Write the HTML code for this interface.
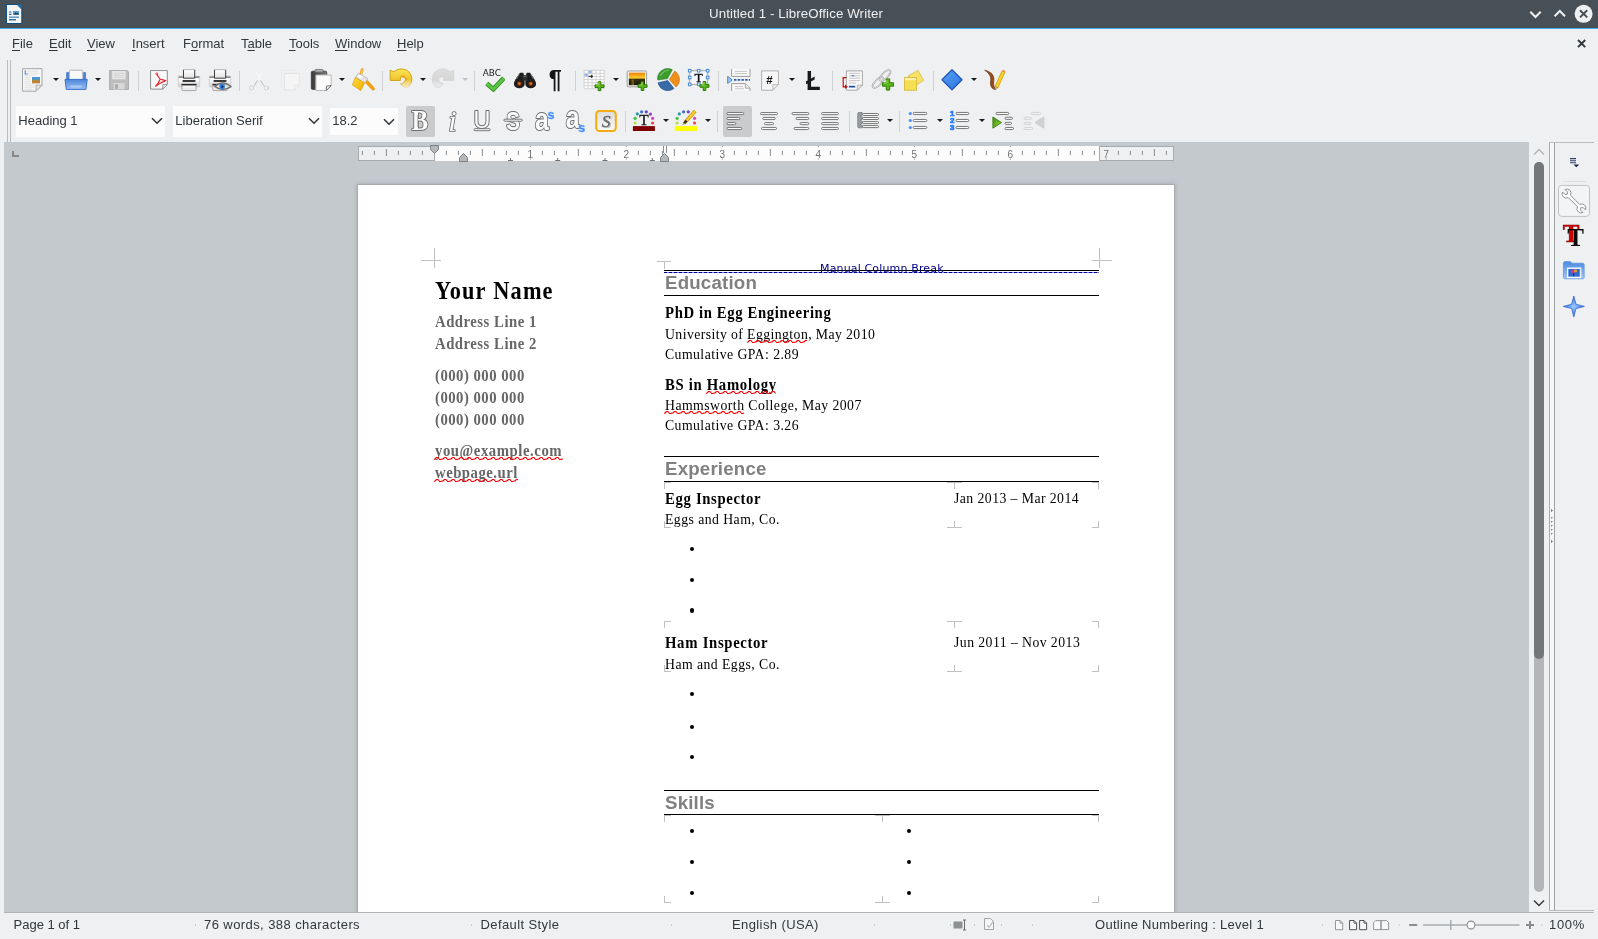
<!DOCTYPE html>
<html lang="en"><head><meta charset="utf-8"><title>Untitled 1 - LibreOffice Writer</title>
<style>
*{box-sizing:border-box;margin:0;padding:0}
html,body{width:1598px;height:939px;overflow:hidden;background:#eff0f1}
body{position:relative;will-change:transform;font-family:"Liberation Sans","DejaVu Sans",sans-serif;font-size:13px;color:#31363b}
.abs{position:absolute}
.t{position:absolute;white-space:nowrap;line-height:1}
#titlebar{left:0;top:0;width:1598px;height:28px;background:#475057}
#titleline{left:0;top:28px;width:1598px;height:1px;background:#3daee9}
#title{left:0;top:0;width:1592px;text-align:center;color:#eff0f1;font-size:13.3px;line-height:27px;letter-spacing:.1px}
.menu{top:37px;font-size:13px;height:14px}
.menu u{text-decoration:underline;text-underline-offset:2px}
.combo{background:#fcfcfc}
.combo .t{left:2.3px;font-size:13px}
.sep{width:1px;background:#cfd1d3}
.arr{width:0;height:0;border-left:3px solid transparent;border-right:3px solid transparent;border-top:3px solid #1a1a1a}
.hl{background:#c9cbcd;border-radius:2px}
#docbg{left:4px;top:142px;width:1525px;height:770px;background:#c4c9cd}
#page{left:358px;top:185px;width:816px;height:740px;background:#fff;box-shadow:0 0 0 1px #a7abae,0 0 4px 1px rgba(70,80,90,.28)}
.doc{font-family:"Liberation Serif","DejaVu Serif",serif;color:#000}
.b{font-weight:bold}
.g{color:#666}
.h1{font-family:"Liberation Sans","DejaVu Sans",sans-serif;font-weight:bold;font-size:18.67px;color:#808080}
.hline{height:1px;background:#000;left:664px;width:435px}
.mk{background:#c0c0c0}
.bul{width:4.4px;height:4.4px;border-radius:50%;background:#000}
.sb{top:918px;font-size:13px}
.wavy{height:3px}
</style></head><body>

<div class="abs" id="titlebar"></div><div class="abs" id="titleline"></div>
<div class="t" id="title">Untitled 1 - LibreOffice Writer</div>
<svg class="abs" style="left:4px;top:2px" width="22" height="24" viewBox="4 2 22 24"><path d="M6.5 4.5H17.2L21.8 9.2V23.5H6.5z" fill="#f4f4f4" stroke="#0f4f80" stroke-width="1"/><path d="M17 4.2h5v5z" fill="#1b6aa5"/><path d="M9 12h2.4M9 14.4h2.4" stroke="#1b6aa5" stroke-width="1.2"/><rect x="13" y="11" width="6" height="4" fill="#5b9bd0"/><path d="M13.5 14.5l2-2.2 1.3 1.2 1-1 1 2z" fill="#24405a"/><path d="M9 17.2h10" stroke="#6a9cc8" stroke-width="1.6"/><path d="M9 19.8h7" stroke="#0f4f80" stroke-width="1.2"/></svg>
<svg class="abs" style="left:1524px;top:2px" width="72" height="24" viewBox="1524 2 72 24"><path d="M1530.3 11.8l5.2 5.2 5.2-5.2" fill="none" stroke="#eff0f1" stroke-width="2"/><path d="M1554.6 16.2l5.2-5.2 5.2 5.2" fill="none" stroke="#eff0f1" stroke-width="2"/><circle cx="1583.6" cy="13.8" r="9" fill="#eff0f1"/><path d="M1580 10.2l7.2 7.2M1587.2 10.2l-7.2 7.2" stroke="#475057" stroke-width="2"/></svg>
<div class="t menu" style="left:12px"><u>F</u>ile</div>
<div class="t menu" style="left:49px"><u>E</u>dit</div>
<div class="t menu" style="left:87px"><u>V</u>iew</div>
<div class="t menu" style="left:132px"><u>I</u>nsert</div>
<div class="t menu" style="left:183px">F<u>o</u>rmat</div>
<div class="t menu" style="left:241px">T<u>a</u>ble</div>
<div class="t menu" style="left:289px"><u>T</u>ools</div>
<div class="t menu" style="left:335px"><u>W</u>indow</div>
<div class="t menu" style="left:397px"><u>H</u>elp</div>
<svg class="abs" style="left:1575px;top:37px" width="14" height="14" viewBox="0 0 14 14"><path d="M3 3l7.2 7.2M10.2 3L3 10.2" stroke="#31363b" stroke-width="1.9"/></svg>
<div class="abs" style="left:7px;top:60px;width:1px;height:82px;background:#b9bbbd"></div>
<div class="abs" style="left:10px;top:60px;width:1px;height:82px;background:#b9bbbd"></div>
<svg class="abs" style="left:20.0px;top:68.0px" width="24" height="24" viewBox="0 0 24 24"><path d="M2.5 0.7H22V17.2L16 23.2H2.5z" fill="#f7f7f7" stroke="#a6a6a6"/><path d="M22 17.2h-6v6z" fill="#e2e2e2" stroke="#a6a6a6" stroke-width=".8" stroke-linejoin="round"/><path d="M4.5 3.2h14" stroke="#dcdcdc" stroke-width=".8"/><path d="M4.5 5.2h15" stroke="#dcdcdc" stroke-width=".8"/><path d="M4.5 7.2h12" stroke="#dcdcdc" stroke-width=".8"/><path d="M4.5 9.2h6" stroke="#dcdcdc" stroke-width=".8"/><path d="M4.5 11.2h6" stroke="#dcdcdc" stroke-width=".8"/><path d="M4.5 13.2h6" stroke="#dcdcdc" stroke-width=".8"/><path d="M4.5 15.2h6" stroke="#dcdcdc" stroke-width=".8"/><path d="M4.5 17.2h12" stroke="#dcdcdc" stroke-width=".8"/><path d="M4.5 19.2h10" stroke="#dcdcdc" stroke-width=".8"/><path d="M4.5 21.2h8" stroke="#dcdcdc" stroke-width=".8"/><path d="M5.2 2.2v3.8h2.3" fill="none" stroke="#5b8fde" stroke-width="1.1"/><rect x="12" y="9" width="8" height="6.2" fill="#4c93dc"/><rect x="12" y="11.6" width="8" height="1" fill="#6aa84f"/><rect x="12" y="12.4" width="8" height="2.8" fill="#c9822a"/></svg>
<div class="abs arr" style="left:52.5px;top:78px;border-top-color:#1a1a1a"></div>
<svg class="abs" style="left:64.0px;top:68.0px" width="24" height="24" viewBox="0 0 24 24"><defs><linearGradient id="gOpen" x1="0" y1="0" x2="0" y2="1"><stop offset="0" stop-color="#4d86dc"/><stop offset="1" stop-color="#9cc0f5"/></linearGradient></defs><path d="M2.6 11.5V4.6h3v6.9zM18.6 11.5V4.6h3v6.9z" fill="#4a80d6" stroke="#386ac0" stroke-width=".6"/><rect x="5.4" y="2.2" width="13.4" height="10" rx="1" fill="#f8f8f8" stroke="#b4b4b4"/><path d="M1 11.4h22.2l-1.3 10H2.3z" fill="url(#gOpen)" stroke="#3a72cc" stroke-linejoin="round"/><path d="M6 17.5h12l-1.2 2H7.2z" fill="#b9d3f8" opacity=".8"/></svg>
<div class="abs arr" style="left:94.5px;top:78px;border-top-color:#1a1a1a"></div>
<svg class="abs" style="left:107.0px;top:68.0px" width="24" height="24" viewBox="0 0 24 24"><path d="M2.5 2.5h17.6l1.4 1.4v17.6h-19z" fill="#bdbdbd" stroke="#adadad"/><rect x="5.2" y="3" width="13.4" height="8.3" fill="#e6e6e6"/><path d="M7 5.3h10M7 7.3h10M7 9.3h10" stroke="#d0d0d0" stroke-width=".8"/><rect x="6.6" y="15" width="11" height="6.5" fill="#d8d8d8"/><rect x="8.2" y="16.3" width="2.6" height="4.4" fill="#a6a6a6"/></svg>
<div class="abs sep" style="left:138px;top:71px;height:20px"></div>
<svg class="abs" style="left:147.0px;top:68.0px" width="24" height="24" viewBox="0 0 24 24"><path d="M3.6 2.6H20.3V16.5L15.700000000000001 21.1H3.6z" fill="#fbfbfb" stroke="#8c8c8c"/><path d="M20.3 16.5h-4.6v4.6z" fill="#e8e8e8" stroke="#8c8c8c" stroke-width=".8" stroke-linejoin="round"/><path d="M10 6.2C11 8.5 12 10 13.2 11.2C12 14 10.5 16.5 8.6 18.2M18.8 12.6C16.5 12 14.5 11.6 13.2 11.2M18.8 12.6C15 14 11.5 16 8.6 18.2" fill="none" stroke="#e8262c" stroke-width="1.2" stroke-linecap="round"/><circle cx="9.8" cy="5.8" r="1" fill="none" stroke="#e8262c" stroke-width=".8"/></svg>
<svg class="abs" style="left:177.0px;top:68.0px" width="24" height="24" viewBox="0 0 24 24"><defs><linearGradient id="gPrn" x1="0" y1="0" x2="0" y2="1"><stop offset="0" stop-color="#8c8c8c"/><stop offset=".15" stop-color="#8c8c8c"/><stop offset=".16" stop-color="#fdfdfd"/><stop offset=".55" stop-color="#f4f4f4"/><stop offset="1" stop-color="#cfcfcf"/></linearGradient><linearGradient id="gPap" x1="0" y1="0" x2="0" y2="1"><stop offset="0" stop-color="#ffffff"/><stop offset="1" stop-color="#e2e2e2"/></linearGradient></defs><rect x="1.3" y="8.1" width="21.4" height="10.8" rx="1" fill="url(#gPrn)" stroke="#c4c4c4" stroke-width=".7"/><path d="M6.5 1.8V10.2H17.7V1.8" fill="url(#gPap)" stroke="#3c3c3c" stroke-width="1"/><path d="M6.5 1.6H17.7" stroke="#b0b0b0" stroke-width=".9"/><rect x="5.6" y="12" width="12.8" height="2" fill="#3a3a3a"/><path d="M2 15.2h20" stroke="#d8d8d8" stroke-width=".8"/><path d="M5.2 17h13.6l.5 4.4a1.2 1.2 0 0 1-1.2 1.2H5.9a1.2 1.2 0 0 1-1.2-1.2z" fill="url(#gPap)" stroke="#9a9a9a" stroke-width=".8"/><path d="M4.4 16.6h15.2" stroke="#2c2c2c" stroke-width="1.5"/></svg>
<svg class="abs" style="left:208.0px;top:68.0px" width="24" height="24" viewBox="0 0 24 24"><defs><linearGradient id="gPrn" x1="0" y1="0" x2="0" y2="1"><stop offset="0" stop-color="#8c8c8c"/><stop offset=".15" stop-color="#8c8c8c"/><stop offset=".16" stop-color="#fdfdfd"/><stop offset=".55" stop-color="#f4f4f4"/><stop offset="1" stop-color="#cfcfcf"/></linearGradient><linearGradient id="gPap" x1="0" y1="0" x2="0" y2="1"><stop offset="0" stop-color="#ffffff"/><stop offset="1" stop-color="#e2e2e2"/></linearGradient></defs><rect x="1.3" y="8.1" width="21.4" height="10.8" rx="1" fill="url(#gPrn)" stroke="#c4c4c4" stroke-width=".7"/><path d="M6.5 1.8V10.2H17.7V1.8" fill="url(#gPap)" stroke="#3c3c3c" stroke-width="1"/><path d="M6.5 1.6H17.7" stroke="#b0b0b0" stroke-width=".9"/><rect x="5.6" y="12" width="12.8" height="2" fill="#3a3a3a"/><path d="M2 15.2h20" stroke="#d8d8d8" stroke-width=".8"/><path d="M5.2 17h13.6l.5 4.4a1.2 1.2 0 0 1-1.2 1.2H5.9a1.2 1.2 0 0 1-1.2-1.2z" fill="url(#gPap)" stroke="#9a9a9a" stroke-width=".8"/><path d="M4.4 16.6h15.2" stroke="#2c2c2c" stroke-width="1.5"/><path d="M6.8 18.4Q14.5 11.4 23 18.6Q14.5 24.4 6.8 18.4z" fill="#f4f4f4" fill-opacity=".7" stroke="#707070" stroke-width="1.5" stroke-linejoin="round"/><circle cx="14.2" cy="18.6" r="2.8" fill="#2c80e2"/><circle cx="14.2" cy="18.6" r="1.2" fill="#0c2a55"/></svg>
<div class="abs sep" style="left:239px;top:71px;height:20px"></div>
<svg class="abs" style="left:247.0px;top:68.0px" width="24" height="24" viewBox="0 0 24 24"><path d="M8.6 3.4L14.6 13.6M15.4 3.4L9.4 13.6" stroke="#f7f7f8" stroke-width="1.5" fill="none"/><path d="M10.6 12.4L7 18M13.4 12.4l3.6 5.6" stroke="#c6c6c6" stroke-width="1.1"/><circle cx="4.6" cy="19.9" r="2.1" fill="none" stroke="#c8c8c8" stroke-dasharray="2.2 1"/><circle cx="19.3" cy="19.9" r="2.1" fill="none" stroke="#c8c8c8" stroke-dasharray="2.2 1"/></svg>
<svg class="abs" style="left:278.0px;top:68.0px" width="24" height="24" viewBox="0 0 24 24"><rect x="3.6" y="2.4" width="13.4" height="15.6" fill="#f1f1f2" stroke="#e9e9ea"/><path d="M6.6 5.4h14.6v12l-4.4 4.4H6.6z" fill="#f5f5f5" stroke="#e4e4e5"/><path d="M21.2 17.4h-4.4v4.4z" fill="#fafafa" stroke="#dedede" stroke-width=".7"/></svg>
<svg class="abs" style="left:309.0px;top:68.0px" width="24" height="24" viewBox="0 0 24 24"><defs><linearGradient id="gClip" x1="0" y1="0" x2="1" y2="0"><stop offset="0" stop-color="#3a3a3a"/><stop offset="1" stop-color="#787878"/></linearGradient></defs><rect x="2.3" y="3.2" width="15.4" height="18.2" rx="1.2" fill="url(#gClip)" stroke="#3a3a3a" stroke-width=".8"/><rect x="6" y="1.4" width="8" height="2.8" rx=".8" fill="#a8a8a8" stroke="#666" stroke-width=".7"/><path d="M6.9 7h15.2v10.6l-4.8 4.9H6.9z" fill="#fbfbfb" stroke="#b8b8b8"/><path d="M22.1 17.6c-2 .2-4 .3-4.6.6c-.3 1.2-.2 2.6-.2 4.3z" fill="#fff" stroke="#444" stroke-width=".8" stroke-linejoin="round"/></svg>
<div class="abs arr" style="left:338.5px;top:78px;border-top-color:#1a1a1a"></div>
<svg class="abs" style="left:351.0px;top:68.0px" width="24" height="24" viewBox="0 0 24 24"><defs><linearGradient id="gBr" x1="0" y1="0" x2="1" y2="1"><stop offset="0" stop-color="#ffe040"/><stop offset="1" stop-color="#f2a900"/></linearGradient></defs><path d="M9.2 8.2L11.2 1.6" stroke="#f3a21c" stroke-width="2.8" stroke-linecap="round"/><path d="M10 6.5L11 2.5" stroke="#fbd98a" stroke-width=".9" stroke-linecap="round"/><path d="M15 13l7 7.6" stroke="#f0a010" stroke-width="3.6" stroke-linecap="round"/><path d="M4.4 9.4L7.4 5.2L17 10.6L13.6 15z" fill="#e4e4e4" stroke="#b0b0b0" stroke-width=".7"/><path d="M6.5 8.5L9 6.8L12 8.5L9.5 10.5z" fill="#fff"/><path d="M1.3 16.8L4.4 9.4L13.6 15L9.7 22.6z" fill="url(#gBr)" stroke="#e09a00" stroke-width=".7" stroke-linejoin="round"/></svg>
<div class="abs sep" style="left:382px;top:71px;height:20px"></div>
<svg class="abs" style="left:389.0px;top:68.0px" width="24" height="24" viewBox="0 0 24 24"><defs><linearGradient id="gUn" gradientUnits="userSpaceOnUse" x1="0" y1="1" x2="0" y2="20"><stop offset="0" stop-color="#fbe45a"/><stop offset=".55" stop-color="#f0c62c"/><stop offset="1" stop-color="#f6e2a0" stop-opacity=".35"/></linearGradient><linearGradient id="gUnS" gradientUnits="userSpaceOnUse" x1="0" y1="1" x2="0" y2="20"><stop offset="0" stop-color="#d2a20c"/><stop offset=".6" stop-color="#d2a20c"/><stop offset="1" stop-color="#d2a20c" stop-opacity=".15"/></linearGradient></defs><path d="M1.2 2.2L4.5 3.7L6.1 3C8 1.6 10.4 1 12.5 1C18.5 1 22.8 5.5 22.8 11.3C22.8 14.6 21.3 17.1 19.2 18.6L16 20C14.6 18.2 13 17 11.4 16C14.6 15.5 16.4 13.8 16.4 11.3C16.4 9.4 14.4 8.6 11.1 9.1L11.5 11.3V12.4H1.2Z" fill="url(#gUn)" stroke="url(#gUnS)" stroke-width="1" stroke-linejoin="round"/><path d="M12 8.2C15.5 8 17.6 9.6 17.4 12.4" fill="none" stroke="#f08a10" stroke-width="1" opacity=".8"/></svg>
<div class="abs arr" style="left:419.5px;top:78px;border-top-color:#1a1a1a"></div>
<svg class="abs" style="left:431.0px;top:68.0px" width="24" height="24" viewBox="0 0 24 24"><defs><linearGradient id="gRe" gradientUnits="userSpaceOnUse" x1="0" y1="1" x2="0" y2="20"><stop offset="0" stop-color="#dedede"/><stop offset=".55" stop-color="#d6d6d6"/><stop offset="1" stop-color="#e4e4e4" stop-opacity=".3"/></linearGradient></defs><g transform="translate(24,0) scale(-1,1)"><path d="M1.2 2.2L4.5 3.7L6.1 3C8 1.6 10.4 1 12.5 1C18.5 1 22.8 5.5 22.8 11.3C22.8 14.6 21.3 17.1 19.2 18.6L16 20C14.6 18.2 13 17 11.4 16C14.6 15.5 16.4 13.8 16.4 11.3C16.4 9.4 14.4 8.6 11.1 9.1L11.5 11.3V12.4H1.2Z" fill="url(#gRe)" stroke="#cdcdcd" stroke-opacity=".7" stroke-width=".9" stroke-linejoin="round"/></g></svg>
<div class="abs arr" style="left:461.5px;top:78px;border-top-color:#c0c2c4"></div>
<div class="abs sep" style="left:474px;top:71px;height:20px"></div>
<svg class="abs" style="left:481.0px;top:68.0px" width="24" height="24" viewBox="0 0 24 24"><text x="10.9" y="7.9" font-family="'DejaVu Sans','Liberation Sans',sans-serif" font-size="9.4" text-anchor="middle" textLength="18.2" lengthAdjust="spacingAndGlyphs" fill="#222">ABC</text><path d="M5.8 15.4L12.4 21.2L22.8 10.2" fill="none" stroke="#2f8f22" stroke-width="4.6"/><path d="M5.8 15.4L12.4 21.2L22.8 10.2" fill="none" stroke="#5ac540" stroke-width="2.8"/></svg>
<svg class="abs" style="left:513.0px;top:68.0px" width="24" height="24" viewBox="0 0 24 24"><defs><radialGradient id="gLens"><stop offset="0" stop-color="#e8873a"/><stop offset=".55" stop-color="#a84a10"/><stop offset="1" stop-color="#2a1000"/></radialGradient></defs><path d="M7 4.8h3.4l1.3 5.2v6a5.4 4.3 0 0 1-10.8 0c0-2 2-6 6.1-11.2z" fill="#1e1e1e"/><path d="M17 4.8h-3.4l-1.3 5.2v6a5.4 4.3 0 0 0 10.8 0c0-2-2-6-6.1-11.2z" fill="#1e1e1e"/><rect x="9.5" y="7" width="5" height="5.5" fill="#2c2c2c"/><rect x="10.6" y="7.6" width="2.8" height="1.6" fill="#6a6a6a"/><path d="M6.2 6.5L3.4 11" stroke="#777" stroke-width="1"/><path d="M17.8 6.5l2.8 4.5" stroke="#777" stroke-width="1"/><circle cx="6.3" cy="15.6" r="2.6" fill="url(#gLens)"/><circle cx="17.7" cy="15.6" r="2.6" fill="url(#gLens)"/></svg>
<svg class="abs" style="left:543.0px;top:68.0px" width="24" height="24" viewBox="0 0 24 24"><text x="12.2" y="19.8" font-family="'Liberation Sans','DejaVu Sans',sans-serif" font-weight="bold" font-size="26.5" text-anchor="middle" textLength="13" lengthAdjust="spacingAndGlyphs" fill="#141414">¶</text></svg>
<div class="abs sep" style="left:575px;top:71px;height:20px"></div>
<svg class="abs" style="left:583.0px;top:68.0px" width="24" height="24" viewBox="0 0 24 24"><rect x="1.1" y="2.3" width="20" height="18.5" fill="#fdfdfd"/><rect x="5.1" y="2.3" width="4" height="3.1" fill="#8db6f2"/><rect x="1.1" y="5.4" width="4" height="3.1" fill="#8db6f2"/><path d="M1.1 2.3v18.5" stroke="#cfcfcf" stroke-width=".9"/><path d="M5.1 2.3v18.5" stroke="#cfcfcf" stroke-width=".9"/><path d="M9.1 2.3v18.5" stroke="#cfcfcf" stroke-width=".9"/><path d="M13.1 2.3v18.5" stroke="#cfcfcf" stroke-width=".9"/><path d="M17.1 2.3v18.5" stroke="#cfcfcf" stroke-width=".9"/><path d="M21.1 2.3v18.5" stroke="#cfcfcf" stroke-width=".9"/><path d="M1.1 2.30h20" stroke="#cfcfcf" stroke-width=".9"/><path d="M1.1 5.38h20" stroke="#cfcfcf" stroke-width=".9"/><path d="M1.1 8.46h20" stroke="#cfcfcf" stroke-width=".9"/><path d="M1.1 11.54h20" stroke="#cfcfcf" stroke-width=".9"/><path d="M1.1 14.62h20" stroke="#cfcfcf" stroke-width=".9"/><path d="M1.1 17.70h20" stroke="#cfcfcf" stroke-width=".9"/><path d="M1.1 20.78h20" stroke="#cfcfcf" stroke-width=".9"/><path d="M5.5 8.4h4M8.3 7.2l1.6 1.2-1.6 1.2z" stroke="#222" stroke-width=".9" fill="#222"/><path d="M15.2 13.7h2.6v3.2h3.2v2.6h-3.2v3.2h-2.6v-3.2h-3.2v-2.6h3.2z" fill="#5cb81a" stroke="#2d7a08" stroke-width="1" stroke-linejoin="round"/><path d="M15.799999999999999 14.5v2.6h-2.4000000000000004" fill="none" stroke="#b6ec6a" stroke-width=".8"/></svg>
<div class="abs arr" style="left:612.5px;top:78px;border-top-color:#1a1a1a"></div>
<svg class="abs" style="left:625.0px;top:68.0px" width="24" height="24" viewBox="0 0 24 24"><defs><linearGradient id="gSun" x1="0" y1="0" x2="0" y2="1"><stop offset="0" stop-color="#ef7f0a"/><stop offset=".45" stop-color="#fdd22c"/><stop offset=".5" stop-color="#3a3010"/><stop offset="1" stop-color="#1e1a08"/></linearGradient></defs><rect x="2.2" y="3" width="19.4" height="15.8" rx=".8" fill="#fbfbfb" stroke="#9c9c9c"/><rect x="3.8" y="4.6" width="16.2" height="12.6" fill="url(#gSun)"/><rect x="6.5" y="11.5" width="2.5" height="5.5" fill="#8a6a10" opacity=".7"/><path d="M16.2 13.5h2.6v3.2h3.2v2.6h-3.2v3.2h-2.6v-3.2h-3.2v-2.6h3.2z" fill="#5cb81a" stroke="#2d7a08" stroke-width="1" stroke-linejoin="round"/><path d="M16.8 14.3v2.6h-2.4000000000000004" fill="none" stroke="#b6ec6a" stroke-width=".8"/></svg>
<svg class="abs" style="left:656.0px;top:68.0px" width="24" height="24" viewBox="0 0 24 24"><path d="M11.6 10.6L16.29 1.77A10 10 0 0 0 1.70 11.99z" fill="#3c9c2e" stroke="#2a7a20" stroke-width=".6" stroke-linejoin="round"/><path d="M13.4 11.6L20.09 19.03A10 10 0 0 0 18.70 3.12z" fill="#f0901c" stroke="#b86408" stroke-width=".6" stroke-linejoin="round"/><path d="M11.8 12.6L2.02 14.68A10 10 0 0 0 17.96 20.48z" fill="#386aa8" stroke="#244a80" stroke-width=".6" stroke-linejoin="round"/><path d="M4 8C6 4.5 9 2.5 13 2" fill="none" stroke="#8ad07a" stroke-width="1.2" opacity=".8"/></svg>
<svg class="abs" style="left:687.0px;top:68.0px" width="24" height="24" viewBox="0 0 24 24"><rect x="2.7" y="2.7" width="18" height="13.7" fill="#f3f7fe" stroke="#9c9c9c" stroke-width=".9"/><rect x="1.4000000000000001" y="1.4000000000000001" width="2.6" height="2.6" fill="#fff" stroke="#3a7ed8" stroke-width=".9"/><rect x="10.399999999999999" y="1.4000000000000001" width="2.6" height="2.6" fill="#fff" stroke="#3a7ed8" stroke-width=".9"/><rect x="19.4" y="1.4000000000000001" width="2.6" height="2.6" fill="#fff" stroke="#3a7ed8" stroke-width=".9"/><rect x="1.4000000000000001" y="8.2" width="2.6" height="2.6" fill="#fff" stroke="#3a7ed8" stroke-width=".9"/><rect x="19.4" y="8.2" width="2.6" height="2.6" fill="#fff" stroke="#3a7ed8" stroke-width=".9"/><rect x="1.4000000000000001" y="15.099999999999998" width="2.6" height="2.6" fill="#fff" stroke="#3a7ed8" stroke-width=".9"/><rect x="10.399999999999999" y="15.099999999999998" width="2.6" height="2.6" fill="#fff" stroke="#3a7ed8" stroke-width=".9"/><text x="11.7" y="14" font-family="'Liberation Serif',serif" font-size="13.5" text-anchor="middle" fill="#111" stroke="#111" stroke-width=".35">T</text><path d="M16.2 13.5h2.6v3.2h3.2v2.6h-3.2v3.2h-2.6v-3.2h-3.2v-2.6h3.2z" fill="#5cb81a" stroke="#2d7a08" stroke-width="1" stroke-linejoin="round"/><path d="M16.8 14.3v2.6h-2.4000000000000004" fill="none" stroke="#b6ec6a" stroke-width=".8"/></svg>
<div class="abs sep" style="left:718px;top:71px;height:20px"></div>
<svg class="abs" style="left:727.0px;top:68.0px" width="24" height="24" viewBox="0 0 24 24"><path d="M4.6 1v7.4h18.4V1" fill="#f8f8f8" stroke="#9c9c9c"/><path d="M8 3.4h12M8 5.6h12" stroke="#c6c6c6"/><path d="M4.6 23v-7.4h13.8l4.6 4.6V23" fill="#f8f8f8" stroke="#9c9c9c"/><path d="M18.4 15.6v4.6H23" fill="#e6e6e6" stroke="#9c9c9c" stroke-width=".8"/><path d="M8 18.6h8M8 20.8h9" stroke="#c6c6c6"/><path d="M7 11.9h16" stroke="#2a5db0" stroke-width="1.9" stroke-dasharray="2.5 1.2"/><path d="M.7 8.4L5.2 11.9L.7 15.4z" fill="#a6caf5" stroke="#3a78c8" stroke-width=".9" stroke-linejoin="round"/></svg>
<svg class="abs" style="left:758.0px;top:68.0px" width="24" height="24" viewBox="0 0 24 24"><path d="M3.6 2.9H20.4V16.6L14.799999999999999 22.2H3.6z" fill="#f8f8f8" stroke="#b0b0b0"/><path d="M20.4 16.6h-5.6v5.6z" fill="#ececec" stroke="#b0b0b0" stroke-width=".8" stroke-linejoin="round"/><text x="11.4" y="16.4" font-family="'Liberation Sans',sans-serif" font-weight="bold" font-size="11.5" text-anchor="middle" fill="#111">#</text></svg>
<div class="abs arr" style="left:788.5px;top:78px;border-top-color:#1a1a1a"></div>
<svg class="abs" style="left:801.0px;top:68.0px" width="24" height="24" viewBox="0 0 24 24"><text x="12.2" y="21.9" font-family="'Liberation Sans','DejaVu Sans',sans-serif" font-weight="bold" font-size="27.4" text-anchor="middle" textLength="14.6" lengthAdjust="spacingAndGlyphs" fill="#1a1a1a">Ł</text></svg>
<div class="abs sep" style="left:832px;top:71px;height:20px"></div>
<svg class="abs" style="left:840.0px;top:68.0px" width="24" height="24" viewBox="0 0 24 24"><path d="M6.4 2.9H22.4V17.2L17.4 22.2H6.4z" fill="#f8f8f8" stroke="#a8a8a8"/><path d="M22.4 17.2h-5v5z" fill="#e8e8e8" stroke="#a8a8a8" stroke-width=".8" stroke-linejoin="round"/><path d="M9 5.4h11M9 7.8h2M15 7.8h5M9 10.2h11M9 12.6h11M9 15h7" stroke="#c2c2c2" stroke-width=".9"/><path d="M11.4 7.8h3" stroke="#2a5db0" stroke-width="1"/><rect x="8.8" y="17.8" width="6.4" height="1.7" fill="#1c4fa0"/><path d="M6.4 9.6H3.2v9.2h2.4" fill="none" stroke="#cc0a0a" stroke-width="1.2"/><path d="M5 16.6l2.8 2.2L5 21z" fill="#cc0a0a"/></svg>
<svg class="abs" style="left:870.0px;top:68.0px" width="24" height="24" viewBox="0 0 24 24"><g transform="rotate(-45 8 14.5)" fill="none" stroke="#8c8c8c"><ellipse cx="8" cy="14.5" rx="7" ry="2.8" stroke-width="1.5" stroke="#9a9a9a"/><ellipse cx="8" cy="14.5" rx="7" ry="2.8" stroke="#f4f4f4" stroke-width=".7"/></g><g transform="rotate(-45 15 7.5)" fill="none" stroke="#8c8c8c"><ellipse cx="15" cy="7.5" rx="7" ry="2.8" stroke-width="1.5" stroke="#9a9a9a"/><ellipse cx="15" cy="7.5" rx="7" ry="2.8" stroke="#f4f4f4" stroke-width=".7"/></g><path d="M16.3 10.9h3.4v3.8999999999999995h3.8999999999999995v3.4h-3.8999999999999995v3.8999999999999995h-3.4v-3.8999999999999995h-3.8999999999999995v-3.4h3.8999999999999995z" fill="#5cb81a" stroke="#2d7a08" stroke-width="1" stroke-linejoin="round"/><path d="M16.900000000000002 11.700000000000001v3.2999999999999994h-3.0999999999999996" fill="none" stroke="#b6ec6a" stroke-width=".8"/></svg>
<svg class="abs" style="left:901.0px;top:68.0px" width="24" height="24" viewBox="0 0 24 24"><path d="M7 8L17 2.3L22.6 12.3L15.6 17z" fill="#f7e268" stroke="#d8bd40" stroke-width=".8" stroke-linejoin="round"/><rect x="3.4" y="9.6" width="12.2" height="12.6" fill="#f5de50" stroke="#d2b436" stroke-width=".8"/><rect x="3.8" y="10" width="11.4" height="2.2" fill="#fbf1a8"/></svg>
<div class="abs sep" style="left:933px;top:71px;height:20px"></div>
<svg class="abs" style="left:940.0px;top:68.0px" width="24" height="24" viewBox="0 0 24 24"><defs><linearGradient id="gDia" x1="0" y1="0" x2="1" y2="1"><stop offset="0" stop-color="#5aa2f6"/><stop offset="1" stop-color="#2a72de"/></linearGradient></defs><path d="M2 11.8L12 1.8L22 11.8L12 21.8z" fill="url(#gDia)" stroke="#1c55b8" stroke-width="1.3" stroke-linejoin="round"/></svg>
<div class="abs arr" style="left:970.5px;top:78px;border-top-color:#1a1a1a"></div>
<svg class="abs" style="left:983.0px;top:68.0px" width="24" height="24" viewBox="0 0 24 24"><path d="M1.6 2.2C7 3.4 11.8 6.4 10.8 13C10.2 17 11 19.6 12.8 21.4C9 21.6 6.8 18 7.6 13C8.4 8.4 6 5 1.6 2.2z" fill="#9c4a12" stroke="#5a2a08" stroke-width=".6"/><path d="M20.6 3.2L13.4 19.2" stroke="#d29a08" stroke-width="4"/><path d="M20.6 3.2L13.4 19.2" stroke="#f8cf2a" stroke-width="2.6"/><path d="M12 18.4l2.9 1.3-2.6 1.9z" fill="#e8c89a" stroke="#8a6a3a" stroke-width=".5"/><path d="M19.4 2.4l2.8 1.3" stroke="#e88a5a" stroke-width="1.6"/></svg>
<div class="abs combo" style="left:16px;top:106px;width:149px;height:31px"><div class="t" style="top:8px">Heading 1</div><svg class="abs" style="left:135px;top:11.0px" width="12" height="8" viewBox="0 0 12 8"><path d="M1 1.2 L6 6.2 L11 1.2" fill="none" stroke="#31363b" stroke-width="1.6"/></svg></div>
<div class="abs combo" style="left:173px;top:106px;width:149px;height:31px"><div class="t" style="top:8px">Liberation Serif</div><svg class="abs" style="left:135px;top:11.0px" width="12" height="8" viewBox="0 0 12 8"><path d="M1 1.2 L6 6.2 L11 1.2" fill="none" stroke="#31363b" stroke-width="1.6"/></svg></div>
<div class="abs combo" style="left:330px;top:108px;width:68px;height:27px"><div class="t" style="top:6px">18.2</div><svg class="abs" style="left:53px;top:10.0px" width="12" height="8" viewBox="0 0 12 8"><path d="M1 1.2 L6 6.2 L11 1.2" fill="none" stroke="#31363b" stroke-width="1.6"/></svg></div>
<div class="abs hl" style="left:406px;top:106px;width:29px;height:31px"></div>
<div class="abs hl" style="left:723px;top:106px;width:29px;height:31px"></div>
<svg class="abs" style="left:408.0px;top:109.0px" width="24" height="24" viewBox="0 0 24 24"><text x="12" y="21" font-family="'Liberation Serif','DejaVu Serif',serif" font-size="28.5" font-weight="bold" font-style="normal" text-anchor="middle" fill="#fbfbfb" stroke="#6c6c6c" stroke-width="2" stroke-linejoin="round" paint-order="stroke fill" textLength="16.4" lengthAdjust="spacingAndGlyphs">B</text><path d="M9.5 6v12" stroke="#c4c4c4" stroke-width="1.2"/></svg>
<svg class="abs" style="left:439.5px;top:109.0px" width="24" height="24" viewBox="0 0 24 24"><text x="12.4" y="22" font-family="'Liberation Serif','DejaVu Serif',serif" font-size="30" font-weight="normal" font-style="italic" text-anchor="middle" fill="#fbfbfb" stroke="#6c6c6c" stroke-width="1.7" stroke-linejoin="round" paint-order="stroke fill" >i</text></svg>
<svg class="abs" style="left:470.0px;top:109.0px" width="24" height="24" viewBox="0 0 24 24"><text x="12" y="18.6" font-family="'Liberation Sans','DejaVu Sans',sans-serif" font-size="23.4" font-weight="normal" font-style="normal" text-anchor="middle" fill="#fbfbfb" stroke="#6c6c6c" stroke-width="1.9" stroke-linejoin="round" paint-order="stroke fill" >U</text><rect x="4" y="19.7" width="16.2" height="2.0" rx="1.0" fill="#fbfbfb" stroke="#6a6a6a" stroke-width=".9"/></svg>
<svg class="abs" style="left:501.0px;top:109.0px" width="24" height="24" viewBox="0 0 24 24"><g transform="translate(12,0) scale(.8,1)"><text x="0" y="20.6" font-family="'Liberation Sans','DejaVu Sans',sans-serif" font-size="25.5" font-weight="bold" font-style="normal" text-anchor="middle" fill="#fbfbfb" stroke="#6c6c6c" stroke-width="2" stroke-linejoin="round" paint-order="stroke fill" >S</text></g><rect x="2.8" y="10.2" width="18.599999999999998" height="2.0" rx="1.0" fill="#fbfbfb" stroke="#6a6a6a" stroke-width=".9"/></svg>
<svg class="abs" style="left:532.0px;top:109.0px" width="24" height="24" viewBox="0 0 24 24"><g transform="translate(10,0) scale(.8,1)"><text x="0" y="21.2" font-family="'Liberation Sans','DejaVu Sans',sans-serif" font-size="31" font-weight="bold" font-style="normal" text-anchor="middle" fill="#fbfbfb" stroke="#6c6c6c" stroke-width="2" stroke-linejoin="round" paint-order="stroke fill" >a</text></g><text x="19" y="9.8" font-family="'Liberation Sans','DejaVu Sans',sans-serif" font-size="12.5" font-weight="bold" text-anchor="middle" fill="#2a7fff" stroke="#7ab0ff" stroke-width=".5">s</text></svg>
<svg class="abs" style="left:563.0px;top:109.0px" width="24" height="24" viewBox="0 0 24 24"><g transform="translate(9.6,0) scale(.8,1)"><text x="0" y="19.3" font-family="'Liberation Sans','DejaVu Sans',sans-serif" font-size="31" font-weight="bold" font-style="normal" text-anchor="middle" fill="#fbfbfb" stroke="#6c6c6c" stroke-width="2" stroke-linejoin="round" paint-order="stroke fill" >a</text></g><text x="18.8" y="22.6" font-family="'Liberation Sans','DejaVu Sans',sans-serif" font-size="12.5" font-weight="bold" text-anchor="middle" fill="#2a7fff" stroke="#7ab0ff" stroke-width=".5">s</text></svg>
<svg class="abs" style="left:594.0px;top:109.0px" width="24" height="24" viewBox="0 0 24 24"><defs><linearGradient id="gSh" x1="0" y1="0" x2="0" y2="1"><stop offset="0" stop-color="#dcdcdc"/><stop offset="1" stop-color="#fafafa"/></linearGradient></defs><rect x="2.2" y="2" width="19.6" height="20" rx="3.2" fill="url(#gSh)" stroke="#f7ad12" stroke-width="2"/><text x="13.4" y="18.6" font-family="'Liberation Serif','DejaVu Serif',serif" font-size="17.5" font-style="italic" text-anchor="middle" fill="#bdbdbd">S</text><text x="12" y="17.8" font-family="'Liberation Serif','DejaVu Serif',serif" font-size="17.5" font-style="italic" text-anchor="middle" fill="#6a6a6a" stroke="#6a6a6a" stroke-width=".4">S</text></svg>
<div class="abs sep" style="left:625px;top:111px;height:21px"></div>
<svg class="abs" style="left:632.0px;top:109.0px" width="24" height="24" viewBox="0 0 24 24"><circle cx="3.1" cy="14" r="1.6" fill="#a8e44c"/><circle cx="3.1" cy="9.3" r="1.6" fill="#3fc240"/><circle cx="5.3" cy="4.9" r="1.6" fill="#2a9aa2"/><circle cx="9.6" cy="2.8" r="1.6" fill="#3a70da"/><circle cx="14.3" cy="2.8" r="1.6" fill="#6a42ca"/><circle cx="18.4" cy="5.1" r="1.6" fill="#8c3cc2"/><circle cx="20.6" cy="9.3" r="1.6" fill="#da42c2"/><circle cx="20.6" cy="14" r="1.6" fill="#f04242"/><text x="12" y="16" font-family="'Liberation Serif','DejaVu Serif',serif" font-size="15.5" text-anchor="middle" fill="#111" stroke="#111" stroke-width=".3">T</text><rect x=".9" y="17.1" width="22" height="4.9" fill="#800000"/></svg>
<div class="abs arr" style="left:662.5px;top:119px;border-top-color:#1a1a1a"></div>
<svg class="abs" style="left:674.0px;top:109.0px" width="24" height="24" viewBox="0 0 24 24"><circle cx="3.1" cy="14" r="1.6" fill="#a8e44c"/><circle cx="3.1" cy="9.3" r="1.6" fill="#3fc240"/><circle cx="5.3" cy="4.9" r="1.6" fill="#2a9aa2"/><circle cx="9.6" cy="2.8" r="1.6" fill="#3a70da"/><circle cx="14.3" cy="2.8" r="1.6" fill="#6a42ca"/><circle cx="20.6" cy="9.3" r="1.6" fill="#da42c2"/><circle cx="20.6" cy="14" r="1.6" fill="#f04242"/><path d="M21.2 2L11 13.4" stroke="#c8960a" stroke-width="3.6"/><path d="M21.2 2L11 13.4" stroke="#f4cc2e" stroke-width="2.2"/><path d="M12.6 11.6l-2.6 2.9" stroke="#333" stroke-width="2.6"/><path d="M10.2 14.2l-1.4 1.6" stroke="#d8b020" stroke-width="1.6"/><rect x=".8" y="17.1" width="22.2" height="4.9" fill="#ffff00"/></svg>
<div class="abs arr" style="left:704.5px;top:119px;border-top-color:#1a1a1a"></div>
<div class="abs sep" style="left:717px;top:111px;height:21px"></div>
<svg class="abs" style="left:725.0px;top:109.0px" width="24" height="24" viewBox="0 0 24 24"><rect x="2" y="3.55" width="16.8" height="2.1" rx="1.05" fill="#fbfbfb" stroke="#6a6a6a" stroke-width=".9"/><rect x="2" y="8.45" width="12.8" height="2.1" rx="1.05" fill="#fbfbfb" stroke="#6a6a6a" stroke-width=".9"/><rect x="2" y="13.549999999999999" width="8.8" height="2.1" rx="1.05" fill="#fbfbfb" stroke="#6a6a6a" stroke-width=".9"/><rect x="2" y="18.45" width="14.8" height="2.1" rx="1.05" fill="#fbfbfb" stroke="#6a6a6a" stroke-width=".9"/></svg>
<svg class="abs" style="left:757.0px;top:109.0px" width="24" height="24" viewBox="0 0 24 24"><rect x="3.5" y="3.55" width="17.0" height="2.1" rx="1.05" fill="#fbfbfb" stroke="#6a6a6a" stroke-width=".9"/><rect x="5.75" y="8.45" width="12.5" height="2.1" rx="1.05" fill="#fbfbfb" stroke="#6a6a6a" stroke-width=".9"/><rect x="7.5" y="13.549999999999999" width="9.0" height="2.1" rx="1.05" fill="#fbfbfb" stroke="#6a6a6a" stroke-width=".9"/><rect x="4.5" y="18.45" width="15.0" height="2.1" rx="1.05" fill="#fbfbfb" stroke="#6a6a6a" stroke-width=".9"/></svg>
<svg class="abs" style="left:788.0px;top:109.0px" width="24" height="24" viewBox="0 0 24 24"><rect x="4" y="3.55" width="16.8" height="2.1" rx="1.05" fill="#fbfbfb" stroke="#6a6a6a" stroke-width=".9"/><rect x="8" y="8.45" width="12.8" height="2.1" rx="1.05" fill="#fbfbfb" stroke="#6a6a6a" stroke-width=".9"/><rect x="12" y="13.549999999999999" width="8.8" height="2.1" rx="1.05" fill="#fbfbfb" stroke="#6a6a6a" stroke-width=".9"/><rect x="6.1" y="18.45" width="14.700000000000001" height="2.1" rx="1.05" fill="#fbfbfb" stroke="#6a6a6a" stroke-width=".9"/></svg>
<svg class="abs" style="left:818.4px;top:109.0px" width="24" height="24" viewBox="0 0 24 24"><rect x="3.6" y="3.55" width="16.799999999999997" height="2.1" rx="1.05" fill="#fbfbfb" stroke="#6a6a6a" stroke-width=".9"/><rect x="3.6" y="8.45" width="16.799999999999997" height="2.1" rx="1.05" fill="#fbfbfb" stroke="#6a6a6a" stroke-width=".9"/><rect x="3.6" y="13.549999999999999" width="16.799999999999997" height="2.1" rx="1.05" fill="#fbfbfb" stroke="#6a6a6a" stroke-width=".9"/><rect x="3.6" y="18.45" width="16.799999999999997" height="2.1" rx="1.05" fill="#fbfbfb" stroke="#6a6a6a" stroke-width=".9"/></svg>
<div class="abs sep" style="left:849px;top:111px;height:21px"></div>
<svg class="abs" style="left:855.5px;top:109.0px" width="24" height="24" viewBox="0 0 24 24"><path d="M1.8 4.6a1 1 0 0 1 1-1h3.4v2.6h-1.6v1.6h1.6v2.6h-1.6V12h1.6v2.6h-1.6v1.6h1.6v2.6H2.8a1 1 0 0 1-1-1z" fill="#9da1a6" stroke="#6f7378" stroke-width=".8"/><rect x="6.6" y="4.5" width="16.0" height="2.0" rx="1.0" fill="#fbfbfb" stroke="#6a6a6a" stroke-width=".9"/><rect x="6.6" y="8.5" width="16.0" height="2.0" rx="1.0" fill="#fbfbfb" stroke="#6a6a6a" stroke-width=".9"/><rect x="6.6" y="12.6" width="16.0" height="2.0" rx="1.0" fill="#fbfbfb" stroke="#6a6a6a" stroke-width=".9"/><rect x="6.6" y="16.6" width="16.0" height="2.0" rx="1.0" fill="#fbfbfb" stroke="#6a6a6a" stroke-width=".9"/></svg>
<div class="abs arr" style="left:886.5px;top:119px;border-top-color:#1a1a1a"></div>
<div class="abs sep" style="left:899px;top:111px;height:21px"></div>
<svg class="abs" style="left:905.0px;top:109.0px" width="24" height="24" viewBox="0 0 24 24"><circle cx="5.3" cy="4.5" r="1.6" fill="#4a90ff"/><rect x="8.2" y="3.45" width="13.600000000000001" height="2.1" rx="1.05" fill="#fbfbfb" stroke="#6a6a6a" stroke-width=".9"/><circle cx="5.3" cy="11.5" r="1.6" fill="#4a90ff"/><rect x="8.2" y="10.45" width="13.600000000000001" height="2.1" rx="1.05" fill="#fbfbfb" stroke="#6a6a6a" stroke-width=".9"/><circle cx="5.3" cy="18.5" r="1.6" fill="#4a90ff"/><rect x="8.2" y="17.45" width="13.600000000000001" height="2.1" rx="1.05" fill="#fbfbfb" stroke="#6a6a6a" stroke-width=".9"/></svg>
<div class="abs arr" style="left:936.5px;top:119px;border-top-color:#1a1a1a"></div>
<svg class="abs" style="left:947.0px;top:109.0px" width="24" height="24" viewBox="0 0 24 24"><text x="5.2" y="7.4" font-family="'Liberation Sans','DejaVu Sans',sans-serif" font-size="8" font-weight="bold" text-anchor="middle" fill="#2a7fff" stroke="#2a7fff" stroke-width=".7">1</text><rect x="9" y="3.45" width="12.8" height="2.1" rx="1.05" fill="#fbfbfb" stroke="#6a6a6a" stroke-width=".9"/><text x="5.2" y="14.4" font-family="'Liberation Sans','DejaVu Sans',sans-serif" font-size="8" font-weight="bold" text-anchor="middle" fill="#2a7fff" stroke="#2a7fff" stroke-width=".7">2</text><rect x="9" y="10.45" width="12.8" height="2.1" rx="1.05" fill="#fbfbfb" stroke="#6a6a6a" stroke-width=".9"/><text x="5.2" y="21.4" font-family="'Liberation Sans','DejaVu Sans',sans-serif" font-size="8" font-weight="bold" text-anchor="middle" fill="#2a7fff" stroke="#2a7fff" stroke-width=".7">3</text><rect x="9" y="17.45" width="12.8" height="2.1" rx="1.05" fill="#fbfbfb" stroke="#6a6a6a" stroke-width=".9"/></svg>
<div class="abs arr" style="left:978.5px;top:119px;border-top-color:#1a1a1a"></div>
<svg class="abs" style="left:991.0px;top:109.0px" width="24" height="24" viewBox="0 0 24 24"><defs><linearGradient id="gPlay" x1="0" y1="0" x2="1" y2="1"><stop offset="0" stop-color="#3a8a08"/><stop offset="1" stop-color="#9ade4a"/></linearGradient></defs><rect x="5" y="3.45" width="12.8" height="2.1" rx="1.05" fill="#fbfbfb" stroke="#6a6a6a" stroke-width=".9"/><rect x="14" y="8.25" width="7.5" height="2.1" rx="1.05" fill="#fbfbfb" stroke="#6a6a6a" stroke-width=".9"/><rect x="14" y="13.35" width="6.5" height="2.1" rx="1.05" fill="#fbfbfb" stroke="#6a6a6a" stroke-width=".9"/><rect x="14" y="18.45" width="8.5" height="2.1" rx="1.05" fill="#fbfbfb" stroke="#6a6a6a" stroke-width=".9"/><path d="M1.9 8L10.5 13.6L1.9 19.2z" fill="url(#gPlay)" stroke="#3a7d0a" stroke-width=".9" stroke-linejoin="round"/></svg>
<svg class="abs" style="left:1022.0px;top:109.0px" width="24" height="24" viewBox="0 0 24 24"><rect x="9" y="3.45" width="9.5" height="2.1" rx="1.05" fill="#f2f2f2" stroke="#d0d0d0" stroke-width=".9"/><rect x="2" y="8.25" width="7.5" height="2.1" rx="1.05" fill="#f2f2f2" stroke="#d0d0d0" stroke-width=".9"/><rect x="2" y="13.35" width="7" height="2.1" rx="1.05" fill="#f2f2f2" stroke="#d0d0d0" stroke-width=".9"/><rect x="2" y="18.45" width="8.5" height="2.1" rx="1.05" fill="#f2f2f2" stroke="#d0d0d0" stroke-width=".9"/><path d="M21.8 8L13 13.6L21.8 19.2z" fill="#d2d2d2" stroke="#c8c8c8" stroke-width=".8" stroke-linejoin="round"/></svg>
<div class="abs" id="docbg"></div>
<svg class="abs" style="left:10px;top:148px" width="10" height="10" viewBox="0 0 10 10"><path d="M3 3v5h6" fill="none" stroke="#858789" stroke-width="2"/></svg>
<svg class="abs" style="left:350px;top:142px" width="840" height="24" viewBox="350 142 840 24" font-family='"Liberation Sans","DejaVu Sans",sans-serif'><rect x="434.5" y="146" width="664.5" height="15" fill="#fcfcfc"/><rect x="358.5" y="146.5" width="76" height="14" fill="#eff0f1" stroke="#a8abae"/><rect x="1099.5" y="146.5" width="74" height="14" fill="#eff0f1" stroke="#a8abae"/><line x1="362.4" x2="362.4" y1="151" y2="155" stroke="#8a8e91" stroke-width="1"/><line x1="374.4" x2="374.4" y1="151" y2="155" stroke="#8a8e91" stroke-width="1"/><line x1="386.4" x2="386.4" y1="149" y2="156" stroke="#8a8e91" stroke-width="1"/><line x1="398.4" x2="398.4" y1="151" y2="155" stroke="#8a8e91" stroke-width="1"/><line x1="410.4" x2="410.4" y1="151" y2="155" stroke="#8a8e91" stroke-width="1"/><line x1="422.4" x2="422.4" y1="151" y2="155" stroke="#8a8e91" stroke-width="1"/><line x1="446.4" x2="446.4" y1="151" y2="155" stroke="#8a8e91" stroke-width="1"/><line x1="458.4" x2="458.4" y1="151" y2="155" stroke="#8a8e91" stroke-width="1"/><line x1="470.4" x2="470.4" y1="151" y2="155" stroke="#8a8e91" stroke-width="1"/><line x1="482.4" x2="482.4" y1="149" y2="156" stroke="#8a8e91" stroke-width="1"/><line x1="494.4" x2="494.4" y1="151" y2="155" stroke="#8a8e91" stroke-width="1"/><line x1="506.4" x2="506.4" y1="151" y2="155" stroke="#8a8e91" stroke-width="1"/><line x1="518.4" x2="518.4" y1="151" y2="155" stroke="#8a8e91" stroke-width="1"/><text x="530.4" y="157.5" font-size="10" fill="#6e7275" text-anchor="middle">1</text><line x1="530.4" x2="530.4" y1="146" y2="148" stroke="#8a8e91" stroke-width="1" stroke-dasharray="1 1"/><line x1="530.4" x2="530.4" y1="158.5" y2="160.5" stroke="#8a8e91" stroke-width="1" stroke-dasharray="1 1"/><line x1="542.4" x2="542.4" y1="151" y2="155" stroke="#8a8e91" stroke-width="1"/><line x1="554.4" x2="554.4" y1="151" y2="155" stroke="#8a8e91" stroke-width="1"/><line x1="566.4" x2="566.4" y1="151" y2="155" stroke="#8a8e91" stroke-width="1"/><line x1="578.4" x2="578.4" y1="149" y2="156" stroke="#8a8e91" stroke-width="1"/><line x1="590.4" x2="590.4" y1="151" y2="155" stroke="#8a8e91" stroke-width="1"/><line x1="602.4" x2="602.4" y1="151" y2="155" stroke="#8a8e91" stroke-width="1"/><line x1="614.4" x2="614.4" y1="151" y2="155" stroke="#8a8e91" stroke-width="1"/><text x="626.4" y="157.5" font-size="10" fill="#6e7275" text-anchor="middle">2</text><line x1="626.4" x2="626.4" y1="146" y2="148" stroke="#8a8e91" stroke-width="1" stroke-dasharray="1 1"/><line x1="626.4" x2="626.4" y1="158.5" y2="160.5" stroke="#8a8e91" stroke-width="1" stroke-dasharray="1 1"/><line x1="638.4" x2="638.4" y1="151" y2="155" stroke="#8a8e91" stroke-width="1"/><line x1="650.4" x2="650.4" y1="151" y2="155" stroke="#8a8e91" stroke-width="1"/><line x1="662.4" x2="662.4" y1="151" y2="155" stroke="#8a8e91" stroke-width="1"/><line x1="674.4" x2="674.4" y1="149" y2="156" stroke="#8a8e91" stroke-width="1"/><line x1="686.4" x2="686.4" y1="151" y2="155" stroke="#8a8e91" stroke-width="1"/><line x1="698.4" x2="698.4" y1="151" y2="155" stroke="#8a8e91" stroke-width="1"/><line x1="710.4" x2="710.4" y1="151" y2="155" stroke="#8a8e91" stroke-width="1"/><text x="722.4" y="157.5" font-size="10" fill="#6e7275" text-anchor="middle">3</text><line x1="722.4" x2="722.4" y1="146" y2="148" stroke="#8a8e91" stroke-width="1" stroke-dasharray="1 1"/><line x1="722.4" x2="722.4" y1="158.5" y2="160.5" stroke="#8a8e91" stroke-width="1" stroke-dasharray="1 1"/><line x1="734.4" x2="734.4" y1="151" y2="155" stroke="#8a8e91" stroke-width="1"/><line x1="746.4" x2="746.4" y1="151" y2="155" stroke="#8a8e91" stroke-width="1"/><line x1="758.4" x2="758.4" y1="151" y2="155" stroke="#8a8e91" stroke-width="1"/><line x1="770.4" x2="770.4" y1="149" y2="156" stroke="#8a8e91" stroke-width="1"/><line x1="782.4" x2="782.4" y1="151" y2="155" stroke="#8a8e91" stroke-width="1"/><line x1="794.4" x2="794.4" y1="151" y2="155" stroke="#8a8e91" stroke-width="1"/><line x1="806.4" x2="806.4" y1="151" y2="155" stroke="#8a8e91" stroke-width="1"/><text x="818.4" y="157.5" font-size="10" fill="#6e7275" text-anchor="middle">4</text><line x1="818.4" x2="818.4" y1="146" y2="148" stroke="#8a8e91" stroke-width="1" stroke-dasharray="1 1"/><line x1="818.4" x2="818.4" y1="158.5" y2="160.5" stroke="#8a8e91" stroke-width="1" stroke-dasharray="1 1"/><line x1="830.4" x2="830.4" y1="151" y2="155" stroke="#8a8e91" stroke-width="1"/><line x1="842.4" x2="842.4" y1="151" y2="155" stroke="#8a8e91" stroke-width="1"/><line x1="854.4" x2="854.4" y1="151" y2="155" stroke="#8a8e91" stroke-width="1"/><line x1="866.4" x2="866.4" y1="149" y2="156" stroke="#8a8e91" stroke-width="1"/><line x1="878.4" x2="878.4" y1="151" y2="155" stroke="#8a8e91" stroke-width="1"/><line x1="890.4" x2="890.4" y1="151" y2="155" stroke="#8a8e91" stroke-width="1"/><line x1="902.4" x2="902.4" y1="151" y2="155" stroke="#8a8e91" stroke-width="1"/><text x="914.4" y="157.5" font-size="10" fill="#6e7275" text-anchor="middle">5</text><line x1="914.4" x2="914.4" y1="146" y2="148" stroke="#8a8e91" stroke-width="1" stroke-dasharray="1 1"/><line x1="914.4" x2="914.4" y1="158.5" y2="160.5" stroke="#8a8e91" stroke-width="1" stroke-dasharray="1 1"/><line x1="926.4" x2="926.4" y1="151" y2="155" stroke="#8a8e91" stroke-width="1"/><line x1="938.4" x2="938.4" y1="151" y2="155" stroke="#8a8e91" stroke-width="1"/><line x1="950.4" x2="950.4" y1="151" y2="155" stroke="#8a8e91" stroke-width="1"/><line x1="962.4" x2="962.4" y1="149" y2="156" stroke="#8a8e91" stroke-width="1"/><line x1="974.4" x2="974.4" y1="151" y2="155" stroke="#8a8e91" stroke-width="1"/><line x1="986.4" x2="986.4" y1="151" y2="155" stroke="#8a8e91" stroke-width="1"/><line x1="998.4" x2="998.4" y1="151" y2="155" stroke="#8a8e91" stroke-width="1"/><text x="1010.4" y="157.5" font-size="10" fill="#6e7275" text-anchor="middle">6</text><line x1="1010.4" x2="1010.4" y1="146" y2="148" stroke="#8a8e91" stroke-width="1" stroke-dasharray="1 1"/><line x1="1010.4" x2="1010.4" y1="158.5" y2="160.5" stroke="#8a8e91" stroke-width="1" stroke-dasharray="1 1"/><line x1="1022.4" x2="1022.4" y1="151" y2="155" stroke="#8a8e91" stroke-width="1"/><line x1="1034.4" x2="1034.4" y1="151" y2="155" stroke="#8a8e91" stroke-width="1"/><line x1="1046.4" x2="1046.4" y1="151" y2="155" stroke="#8a8e91" stroke-width="1"/><line x1="1058.4" x2="1058.4" y1="149" y2="156" stroke="#8a8e91" stroke-width="1"/><line x1="1070.4" x2="1070.4" y1="151" y2="155" stroke="#8a8e91" stroke-width="1"/><line x1="1082.4" x2="1082.4" y1="151" y2="155" stroke="#8a8e91" stroke-width="1"/><line x1="1094.4" x2="1094.4" y1="151" y2="155" stroke="#8a8e91" stroke-width="1"/><text x="1106.4" y="157.5" font-size="10" fill="#6e7275" text-anchor="middle">7</text><line x1="1106.4" x2="1106.4" y1="146" y2="148" stroke="#8a8e91" stroke-width="1" stroke-dasharray="1 1"/><line x1="1106.4" x2="1106.4" y1="158.5" y2="160.5" stroke="#8a8e91" stroke-width="1" stroke-dasharray="1 1"/><line x1="1118.4" x2="1118.4" y1="151" y2="155" stroke="#8a8e91" stroke-width="1"/><line x1="1130.4" x2="1130.4" y1="151" y2="155" stroke="#8a8e91" stroke-width="1"/><line x1="1142.4" x2="1142.4" y1="151" y2="155" stroke="#8a8e91" stroke-width="1"/><line x1="1154.4" x2="1154.4" y1="149" y2="156" stroke="#8a8e91" stroke-width="1"/><line x1="1166.4" x2="1166.4" y1="151" y2="155" stroke="#8a8e91" stroke-width="1"/><path d="M430.5 145.5h8v4l-4 4-4-4z" fill="#b4b8bb" stroke="#7d8184"/><path d="M459.5 161.5h8v-4l-4-4-4 4z" fill="#b4b8bb" stroke="#7d8184"/><path d="M660.5 161.5h8v-4l-4-4-4 4z" fill="#b4b8bb" stroke="#7d8184"/><path d="M663.5 146v7M666.5 146v7" stroke="#8a8e91" fill="none"/><path d="M510.5 158v3M508.0 160.5h5" stroke="#6e7275" fill="none"/><path d="M557.7 158v3M555.2 160.5h5" stroke="#6e7275" fill="none"/><path d="M605 158v3M602.5 160.5h5" stroke="#6e7275" fill="none"/><path d="M652.3 158v3M649.8 160.5h5" stroke="#6e7275" fill="none"/></svg>
<div class="abs" id="page"></div>
<div class="abs mk" style="left:421px;top:260px;width:20px;height:1px"></div><div class="abs mk" style="left:434px;top:248px;width:1px;height:20px"></div>
<div class="abs mk" style="left:1092px;top:260px;width:20px;height:1px"></div><div class="abs mk" style="left:1099px;top:248px;width:1px;height:20px"></div>
<div class="abs mk" style="left:657px;top:261px;width:14px;height:1px"></div><div class="abs mk" style="left:664px;top:261px;width:1px;height:8px"></div>
<div class="t doc b" style="left:435px;top:279.07px;font-size:24.27px;line-height:24.27px;letter-spacing:1.216px;word-spacing:0.489px;transform:scaleX(0.92);transform-origin:0 0;">Your Name</div>
<div class="t doc b g" style="left:435px;top:314.00px;font-size:16.00px;line-height:16.00px;letter-spacing:0.558px;word-spacing:0.003px;transform:scaleX(0.92);transform-origin:0 0;">Address Line 1</div>
<div class="t doc b g" style="left:435px;top:336.00px;font-size:16.00px;line-height:16.00px;letter-spacing:0.558px;word-spacing:0.003px;transform:scaleX(0.92);transform-origin:0 0;">Address Line 2</div>
<div class="t doc b g" style="left:435px;top:368.00px;font-size:16.00px;line-height:16.00px;letter-spacing:0.531px;word-spacing:0.017px;transform:scaleX(0.92);transform-origin:0 0;">(000) 000 000</div>
<div class="t doc b g" style="left:435px;top:390.00px;font-size:16.00px;line-height:16.00px;letter-spacing:0.531px;word-spacing:0.017px;transform:scaleX(0.92);transform-origin:0 0;">(000) 000 000</div>
<div class="t doc b g" style="left:435px;top:412.00px;font-size:16.00px;line-height:16.00px;letter-spacing:0.531px;word-spacing:0.017px;transform:scaleX(0.92);transform-origin:0 0;">(000) 000 000</div>
<div class="t doc b g" style="left:435px;top:443.00px;font-size:16.00px;line-height:16.00px;letter-spacing:0.608px;word-spacing:0.000px;transform:scaleX(0.92);transform-origin:0 0;">you@example.com</div>
<div class="t doc b g" style="left:435px;top:465.00px;font-size:16.00px;line-height:16.00px;letter-spacing:0.540px;word-spacing:0.000px;transform:scaleX(0.92);transform-origin:0 0;">webpage.url</div>
<div class="abs hline" style="top:270px"></div>
<div class="abs" style="left:664px;top:272px;width:435px;height:1px;background:repeating-linear-gradient(90deg,#00007f 0 3px,#7a7aff 3px 5px)"></div>
<div class="t" style="left:820px;top:262.5px;font-family:'DejaVu Sans','Liberation Sans',sans-serif;font-size:11px;line-height:11px;letter-spacing:.15px;color:#000080">Manual Column Break</div>
<div class="t doc h1" style="left:665px;top:273.60px;font-size:18.67px;line-height:18.67px;letter-spacing:0.200px;word-spacing:0.000px;">Education</div>
<div class="abs hline" style="top:295px"></div>
<div class="t doc b" style="left:665px;top:305.00px;font-size:16.00px;line-height:16.00px;letter-spacing:0.704px;word-spacing:-0.121px;transform:scaleX(0.92);transform-origin:0 0;">PhD in Egg Engineering</div>
<div class="t doc " style="left:665px;top:327.88px;font-size:13.75px;line-height:13.75px;letter-spacing:0.421px;word-spacing:-0.086px;">University of Eggington, May 2010</div>
<div class="t doc " style="left:665px;top:347.88px;font-size:13.75px;line-height:13.75px;letter-spacing:0.438px;word-spacing:0.010px;">Cumulative GPA: 2.89</div>
<div class="t doc b" style="left:665px;top:377.00px;font-size:16.00px;line-height:16.00px;letter-spacing:0.747px;word-spacing:-0.026px;transform:scaleX(0.92);transform-origin:0 0;">BS in Hamology</div>
<div class="t doc " style="left:665px;top:398.88px;font-size:13.75px;line-height:13.75px;letter-spacing:0.463px;word-spacing:-0.080px;">Hammsworth College, May 2007</div>
<div class="t doc " style="left:665px;top:418.88px;font-size:13.75px;line-height:13.75px;letter-spacing:0.438px;word-spacing:0.010px;">Cumulative GPA: 3.26</div>
<div class="abs hline" style="top:456px"></div>
<div class="t doc h1" style="left:665px;top:459.60px;font-size:18.67px;line-height:18.67px;letter-spacing:0.200px;word-spacing:0.000px;">Experience</div>
<div class="abs hline" style="top:481px"></div>
<div class="t doc b" style="left:665px;top:491.00px;font-size:16.00px;line-height:16.00px;letter-spacing:0.663px;word-spacing:0.348px;transform:scaleX(0.92);transform-origin:0 0;">Egg Inspector</div>
<div class="t doc " style="left:954px;top:491.88px;font-size:13.75px;line-height:13.75px;letter-spacing:0.458px;word-spacing:-0.115px;">Jan 2013 – Mar 2014</div>
<div class="t doc " style="left:665px;top:512.88px;font-size:13.75px;line-height:13.75px;letter-spacing:0.462px;word-spacing:-0.079px;">Eggs and Ham, Co.</div>
<div class="t doc b" style="left:665px;top:635.00px;font-size:16.00px;line-height:16.00px;letter-spacing:0.715px;word-spacing:0.348px;transform:scaleX(0.92);transform-origin:0 0;">Ham Inspector</div>
<div class="t doc " style="left:954px;top:635.88px;font-size:13.75px;line-height:13.75px;letter-spacing:0.463px;word-spacing:-0.118px;">Jun 2011 – Nov 2013</div>
<div class="t doc " style="left:665px;top:657.88px;font-size:13.75px;line-height:13.75px;letter-spacing:0.462px;word-spacing:-0.079px;">Ham and Eggs, Co.</div>
<div class="abs hline" style="top:790px"></div>
<div class="t doc h1" style="left:665px;top:793.60px;font-size:18.67px;line-height:18.67px;letter-spacing:0.200px;word-spacing:0.000px;">Skills</div>
<div class="abs hline" style="top:814px"></div>
<div class="abs bul" style="left:689.8px;top:546.6px"></div>
<div class="abs bul" style="left:689.8px;top:577.5px"></div>
<div class="abs bul" style="left:689.8px;top:608.4px"></div>
<div class="abs bul" style="left:689.8px;top:691.6px"></div>
<div class="abs bul" style="left:689.8px;top:724.8px"></div>
<div class="abs bul" style="left:689.8px;top:754.6px"></div>
<div class="abs bul" style="left:689.8px;top:828.7px"></div>
<div class="abs bul" style="left:689.8px;top:859.8px"></div>
<div class="abs bul" style="left:689.8px;top:890.7px"></div>
<div class="abs bul" style="left:906.6px;top:828.7px"></div>
<div class="abs bul" style="left:906.6px;top:859.8px"></div>
<div class="abs bul" style="left:906.6px;top:890.7px"></div>
<svg class="abs" style="left:0;top:0" width="1598" height="939" viewBox="0 0 1598 939"><path d="M434 459.5 L435 459.0 L436.5 457.5 L438 457.5 L439.5 459.5 L441 459.5 L442 459.0 L443 459.0 L444.5 457.5 L446 457.5 L447.5 459.5 L449 459.5 L450 459.0 L451 459.0 L452.5 457.5 L454 457.5 L455.5 459.5 L457 459.5 L458 459.0 L459 459.0 L460.5 457.5 L462 457.5 L463.5 459.5 L465 459.5 L466 459.0 L467 459.0 L468.5 457.5 L470 457.5 L471.5 459.5 L473 459.5 L474 459.0 L475 459.0 L476.5 457.5 L478 457.5 L479.5 459.5 L481 459.5 L482 459.0 L483 459.0 L484.5 457.5 L486 457.5 L487.5 459.5 L489 459.5 L490 459.0 L491 459.0 L492.5 457.5 L494 457.5 L495.5 459.5 L497 459.5 L498 459.0 L499 459.0 L500.5 457.5 L502 457.5 L503.5 459.5 L505 459.5 L506 459.0 L507 459.0 L508.5 457.5 L510 457.5 L511.5 459.5 L513 459.5 L514 459.0 L515 459.0 L516.5 457.5 L518 457.5 L519.5 459.5 L521 459.5 L522 459.0 L523 459.0 L524.5 457.5 L526 457.5 L527.5 459.5 L529 459.5 L530 459.0 L531 459.0 L532.5 457.5 L534 457.5 L535.5 459.5 L537 459.5 L538 459.0 L539 459.0 L540.5 457.5 L542 457.5 L543.5 459.5 L545 459.5 L546 459.0 L547 459.0 L548.5 457.5 L550 457.5 L551.5 459.5 L553 459.5 L554 459.0 L555 459.0 L556.5 457.5 L558 457.5 L559.5 459.5 L561 459.5 L562 459.0 L563 459.0" fill="none" stroke="#ff0000" stroke-width="1.1" stroke-linejoin="round"/></svg>
<svg class="abs" style="left:0;top:0" width="1598" height="939" viewBox="0 0 1598 939"><path d="M434 481.5 L435 481.0 L436.5 479.5 L438 479.5 L439.5 481.5 L441 481.5 L442 481.0 L443 481.0 L444.5 479.5 L446 479.5 L447.5 481.5 L449 481.5 L450 481.0 L451 481.0 L452.5 479.5 L454 479.5 L455.5 481.5 L457 481.5 L458 481.0 L459 481.0 L460.5 479.5 L462 479.5 L463.5 481.5 L465 481.5 L466 481.0 L467 481.0 L468.5 479.5 L470 479.5 L471.5 481.5 L473 481.5 L474 481.0 L475 481.0 L476.5 479.5 L478 479.5 L479.5 481.5 L481 481.5 L482 481.0 L483 481.0 L484.5 479.5 L486 479.5 L487.5 481.5 L489 481.5 L490 481.0 L491 481.0 L492.5 479.5 L494 479.5 L495.5 481.5 L497 481.5 L498 481.0 L499 481.0 L500.5 479.5 L502 479.5 L503.5 481.5 L505 481.5 L506 481.0 L507 481.0 L508.5 479.5 L510 479.5 L511.5 481.5 L513 481.5 L514 481.0 L515 481.0 L516.5 479.5 L518 479.5" fill="none" stroke="#ff0000" stroke-width="1.1" stroke-linejoin="round"/></svg>
<svg class="abs" style="left:0;top:0" width="1598" height="939" viewBox="0 0 1598 939"><path d="M747 342.5 L748 342.0 L749.5 340.5 L751 340.5 L752.5 342.5 L754 342.5 L755 342.0 L756 342.0 L757.5 340.5 L759 340.5 L760.5 342.5 L762 342.5 L763 342.0 L764 342.0 L765.5 340.5 L767 340.5 L768.5 342.5 L770 342.5 L771 342.0 L772 342.0 L773.5 340.5 L775 340.5 L776.5 342.5 L778 342.5 L779 342.0 L780 342.0 L781.5 340.5 L783 340.5 L784.5 342.5 L786 342.5 L787 342.0 L788 342.0 L789.5 340.5 L791 340.5 L792.5 342.5 L794 342.5 L795 342.0 L796 342.0 L797.5 340.5 L799 340.5 L800.5 342.5 L802 342.5 L803 342.0 L804 342.0 L805.5 340.5 L807 340.5" fill="none" stroke="#ff0000" stroke-width="1.1" stroke-linejoin="round"/></svg>
<svg class="abs" style="left:0;top:0" width="1598" height="939" viewBox="0 0 1598 939"><path d="M706 393.5 L707 393.0 L708.5 391.5 L710 391.5 L711.5 393.5 L713 393.5 L714 393.0 L715 393.0 L716.5 391.5 L718 391.5 L719.5 393.5 L721 393.5 L722 393.0 L723 393.0 L724.5 391.5 L726 391.5 L727.5 393.5 L729 393.5 L730 393.0 L731 393.0 L732.5 391.5 L734 391.5 L735.5 393.5 L737 393.5 L738 393.0 L739 393.0 L740.5 391.5 L742 391.5 L743.5 393.5 L745 393.5 L746 393.0 L747 393.0 L748.5 391.5 L750 391.5 L751.5 393.5 L753 393.5 L754 393.0 L755 393.0 L756.5 391.5 L758 391.5 L759.5 393.5 L761 393.5 L762 393.0 L763 393.0 L764.5 391.5 L766 391.5 L767.5 393.5 L769 393.5 L770 393.0 L771 393.0 L772.5 391.5 L774 391.5 L775.5 393.5" fill="none" stroke="#ff0000" stroke-width="1.1" stroke-linejoin="round"/></svg>
<svg class="abs" style="left:0;top:0" width="1598" height="939" viewBox="0 0 1598 939"><path d="M664 413.5 L665 413.0 L666.5 411.5 L668 411.5 L669.5 413.5 L671 413.5 L672 413.0 L673 413.0 L674.5 411.5 L676 411.5 L677.5 413.5 L679 413.5 L680 413.0 L681 413.0 L682.5 411.5 L684 411.5 L685.5 413.5 L687 413.5 L688 413.0 L689 413.0 L690.5 411.5 L692 411.5 L693.5 413.5 L695 413.5 L696 413.0 L697 413.0 L698.5 411.5 L700 411.5 L701.5 413.5 L703 413.5 L704 413.0 L705 413.0 L706.5 411.5 L708 411.5 L709.5 413.5 L711 413.5 L712 413.0 L713 413.0 L714.5 411.5 L716 411.5 L717.5 413.5 L719 413.5 L720 413.0 L721 413.0 L722.5 411.5 L724 411.5 L725.5 413.5 L727 413.5 L728 413.0 L729 413.0 L730.5 411.5 L732 411.5 L733.5 413.5 L735 413.5 L736 413.0 L737 413.0 L738.5 411.5 L740 411.5 L741.5 413.5 L743 413.5 L744 413.0" fill="none" stroke="#ff0000" stroke-width="1.1" stroke-linejoin="round"/></svg>
<div class="abs mk" style="left:664px;top:482px;width:7px;height:1px"></div><div class="abs mk" style="left:664px;top:482px;width:1px;height:7px"></div><div class="abs mk" style="left:947px;top:482px;width:15px;height:1px"></div><div class="abs mk" style="left:954px;top:482px;width:1px;height:7px"></div><div class="abs mk" style="left:1092px;top:482px;width:7px;height:1px"></div><div class="abs mk" style="left:1098px;top:482px;width:1px;height:7px"></div>
<div class="abs mk" style="left:664px;top:527px;width:7px;height:1px"></div><div class="abs mk" style="left:664px;top:521px;width:1px;height:7px"></div><div class="abs mk" style="left:947px;top:527px;width:15px;height:1px"></div><div class="abs mk" style="left:954px;top:521px;width:1px;height:7px"></div><div class="abs mk" style="left:1092px;top:527px;width:7px;height:1px"></div><div class="abs mk" style="left:1098px;top:521px;width:1px;height:7px"></div>
<div class="abs mk" style="left:664px;top:621px;width:7px;height:1px"></div><div class="abs mk" style="left:664px;top:621px;width:1px;height:7px"></div><div class="abs mk" style="left:947px;top:621px;width:15px;height:1px"></div><div class="abs mk" style="left:954px;top:621px;width:1px;height:7px"></div><div class="abs mk" style="left:1092px;top:621px;width:7px;height:1px"></div><div class="abs mk" style="left:1098px;top:621px;width:1px;height:7px"></div>
<div class="abs mk" style="left:664px;top:671px;width:7px;height:1px"></div><div class="abs mk" style="left:664px;top:665px;width:1px;height:7px"></div><div class="abs mk" style="left:947px;top:671px;width:15px;height:1px"></div><div class="abs mk" style="left:954px;top:665px;width:1px;height:7px"></div><div class="abs mk" style="left:1092px;top:671px;width:7px;height:1px"></div><div class="abs mk" style="left:1098px;top:665px;width:1px;height:7px"></div>
<div class="abs mk" style="left:664px;top:815px;width:7px;height:1px"></div><div class="abs mk" style="left:664px;top:815px;width:1px;height:7px"></div><div class="abs mk" style="left:875px;top:815px;width:15px;height:1px"></div><div class="abs mk" style="left:882px;top:815px;width:1px;height:7px"></div><div class="abs mk" style="left:1092px;top:815px;width:7px;height:1px"></div><div class="abs mk" style="left:1098px;top:815px;width:1px;height:7px"></div>
<div class="abs mk" style="left:664px;top:902px;width:7px;height:1px"></div><div class="abs mk" style="left:664px;top:896px;width:1px;height:7px"></div><div class="abs mk" style="left:875px;top:902px;width:15px;height:1px"></div><div class="abs mk" style="left:882px;top:896px;width:1px;height:7px"></div><div class="abs mk" style="left:1092px;top:902px;width:7px;height:1px"></div><div class="abs mk" style="left:1098px;top:896px;width:1px;height:7px"></div>
<div class="abs" style="left:1529px;top:142px;width:21px;height:770px;background:#eff0f1"></div>
<svg class="abs" style="left:1532px;top:147px" width="14" height="10" viewBox="0 0 14 10"><path d="M2 7.5 L7 2.5 L12 7.5" fill="none" stroke="#b4b7ba" stroke-width="1.5"/></svg>
<svg class="abs" style="left:1532px;top:898px" width="14" height="10" viewBox="0 0 14 10"><path d="M2 2.5 L7 7.5 L12 2.5" fill="none" stroke="#31363b" stroke-width="1.4"/></svg>
<div class="abs" style="left:1534px;top:162px;width:10px;height:730px;border-radius:5px;background:#b3b5b9"></div>
<div class="abs" style="left:1534px;top:162px;width:10px;height:497px;border-radius:5px;background:#73777c"></div>
<div class="abs" style="left:1550px;top:142px;width:48px;height:770px;background:#eff0f1"></div>
<div class="abs" style="left:1549px;top:142px;width:1px;height:769px;background:#a9acaf"></div><div class="abs" style="left:1549px;top:142px;width:45px;height:1px;background:#b9bcbf"></div><div class="abs" style="left:1549px;top:910px;width:45px;height:1px;background:#b9bcbf"></div>
<div class="abs" style="left:1554px;top:143px;width:1px;height:767px;background:#9da0a3"></div>
<div class="abs" style="left:1550px;top:143px;width:4px;height:767px;background:#f6f7f7"></div>
<svg class="abs" style="left:1550px;top:505px" width="5" height="42" viewBox="1550 505 5 42"><path d="M1551 508.8l2 1.7-2 1.7zM1551 539.8l2 1.7-2 1.7z" fill="#7c7f82"/><path d="M1551 517h2l-2 2z" fill="#85888b"/><path d="M1551 521h2l-2 2z" fill="#85888b"/><path d="M1551 525h2l-2 2z" fill="#85888b"/><path d="M1551 529h2l-2 2z" fill="#85888b"/><path d="M1551 533h2l-2 2z" fill="#85888b"/></svg>
<svg class="abs" style="left:1550px;top:142px" width="48" height="200" viewBox="1550 142 48 200"><path d="M1570 158.6h6M1570 160.7h6M1570 162.8h6" stroke="#2c3e66" stroke-width="1.1"/><path d="M1573.4 164.4h5.8l-2.9 2.9z" fill="#16233f"/><path d="M1563 181.4h23" stroke="#dcdee0"/><rect x="1558.5" y="185.4" width="31" height="31" rx="3.2" fill="#f3f4f5" stroke="#bfc2c5"/><g transform="rotate(-45 1574 201)"><path d="M1572.2 186.6v3.6l1.8 1.2 1.8-1.2v-3.6a4.1 4.1 0 0 1 0 7.8l-.2.4v12.4l.2.4a4.1 4.1 0 0 1 0 7.8v-3.6l-1.8-1.2-1.8 1.2v3.6a4.1 4.1 0 0 1 0-7.8l.2-.4v-12.4l-.2-.4a4.1 4.1 0 0 1 0-7.8z" fill="#fcfcfc" stroke="#8e8e8e" stroke-width=".9" stroke-linejoin="round"/></g><text x="1571" y="242" font-family="'Liberation Serif','DejaVu Serif',serif" font-weight="bold" font-size="25" text-anchor="middle" fill="#d40000" stroke="#7a0000" stroke-width=".5">T</text><text x="1575.6" y="246" font-family="'Liberation Serif','DejaVu Serif',serif" font-weight="bold" font-size="25" text-anchor="middle" fill="#0a0a0a">T</text><defs><linearGradient id="gFol" x1="0" y1="0" x2="0" y2="1"><stop offset="0" stop-color="#4a8ae0"/><stop offset="1" stop-color="#a4c6f6"/></linearGradient></defs><path d="M1563.4 263.2c0-1 .6-1.6 1.6-1.6h5.4l1.6 1.6h10.6c1 0 1.6.6 1.6 1.6v12.4c0 1-.6 1.6-1.6 1.6h-17.6c-1 0-1.6-.6-1.6-1.6z" fill="url(#gFol)" stroke="#5a90dc" stroke-width=".7"/><rect x="1567.4" y="268" width="13.4" height="9.6" fill="#dfe9f8" stroke="#ffffff" stroke-width=".9"/><rect x="1568.4" y="269" width="11.4" height="7.6" fill="#2e6ad0"/><circle cx="1573" cy="271.6" r="2" fill="#c83a8a"/><circle cx="1575.6" cy="270.8" r="1.6" fill="#e8a020"/><path d="M1573.6 273v3.4" stroke="#4a2a10" stroke-width="1"/><defs><radialGradient id="gStar"><stop offset="0" stop-color="#9cc8ff"/><stop offset="1" stop-color="#2a6fe0"/></radialGradient></defs><path d="M1573.8 296l2.2 8.2 8.4 2.2-8.4 2.2-2.2 8.4-2.2-8.4-8.4-2.2 8.4-2.2z" fill="url(#gStar)" stroke="#2a62c8" stroke-width=".7" stroke-linejoin="round"/></svg>
<div class="abs" style="left:0;top:912px;width:1598px;height:27px;background:#eff0f1"></div>
<div class="abs" style="left:4px;top:912px;width:1590px;height:1px;background:#b2b5b8"></div>
<div class="t sb" style="left:13.5px;letter-spacing:0px">Page 1 of 1</div>
<div class="t sb" style="left:204px;letter-spacing:0.42px">76 words, 388 characters</div>
<div class="t sb" style="left:480.5px;letter-spacing:0.4px">Default Style</div>
<div class="t sb" style="left:732px;letter-spacing:0.4px">English (USA)</div>
<div class="t sb" style="left:1095px;letter-spacing:0.29px">Outline Numbering : Level 1</div>
<div class="t sb" style="left:1549px;letter-spacing:0.7px">100%</div>
<svg class="abs" style="left:0;top:912px" width="1598" height="27" viewBox="0 912 1598 27"><rect x="195" y="924.5" width="1" height="1" fill="#a4a7aa"/><rect x="471" y="924.5" width="1" height="1" fill="#a4a7aa"/><rect x="671" y="924.5" width="1" height="1" fill="#a4a7aa"/><rect x="874" y="924.5" width="1" height="1" fill="#a4a7aa"/><rect x="950" y="924.5" width="1" height="1" fill="#a4a7aa"/><rect x="974" y="924.5" width="1" height="1" fill="#a4a7aa"/><rect x="1001" y="924.5" width="1" height="1" fill="#a4a7aa"/><rect x="1032" y="924.5" width="1" height="1" fill="#a4a7aa"/><rect x="1322" y="924.5" width="1" height="1" fill="#a4a7aa"/><rect x="1398.6" y="924.5" width="1" height="1" fill="#a4a7aa"/><rect x="1541.5" y="924.5" width="1" height="1" fill="#a4a7aa"/><rect x="953.5" y="921.5" width="9" height="7" fill="#8e9194"/><path d="M964.5 920v10M963 920h3M963 930h3" stroke="#5c5f62" stroke-width=".9"/><path d="M984.5 918.5h6l3 3v8h-9z" fill="#f6f6f6" stroke="#9a9da0" stroke-width=".9"/><path d="M987 925l2 2.4 4.6-6.4" fill="none" stroke="#b4b7ba" stroke-width="1.1"/><path d="M1335.5 920.5h4.6l2.6 2.6v6.6h-7.2z" fill="#f8f8f8" stroke="#8a8d90" stroke-width=".9"/><path d="M1340 920.6v2.6h2.6" fill="none" stroke="#8a8d90" stroke-width=".8"/><path d="M1349.6 920.5h4.4l2.6 2.6v6.6h-7zM1359.6 920.5h4.4l2.6 2.6v6.6h-7z" fill="#f8f8f8" stroke="#3c3f42" stroke-width=".9"/><path d="M1354 920.6v2.6h2.6M1364 920.6v2.6h2.6" fill="none" stroke="#3c3f42" stroke-width=".8"/><path d="M1373.6 922.6l2-2h5.4v9h-7.4zM1381 920.6h5.6l2 2v7h-7.6z" fill="#f8f8f8" stroke="#8a8d90" stroke-width=".9"/><path d="M1409.2 925h8" stroke="#8a8d90" stroke-width="2"/><path d="M1423 925h96.6" stroke="#a9acaf" stroke-width="1.4"/><path d="M1450.8 920v10" stroke="#a4a7aa" stroke-width="1.4"/><circle cx="1471" cy="925" r="3.9" fill="#fcfcfc" stroke="#8a8d90" stroke-width="1.1"/><path d="M1526 925h8M1530 921v8" stroke="#8a8d90" stroke-width="2"/></svg>
</body></html>
